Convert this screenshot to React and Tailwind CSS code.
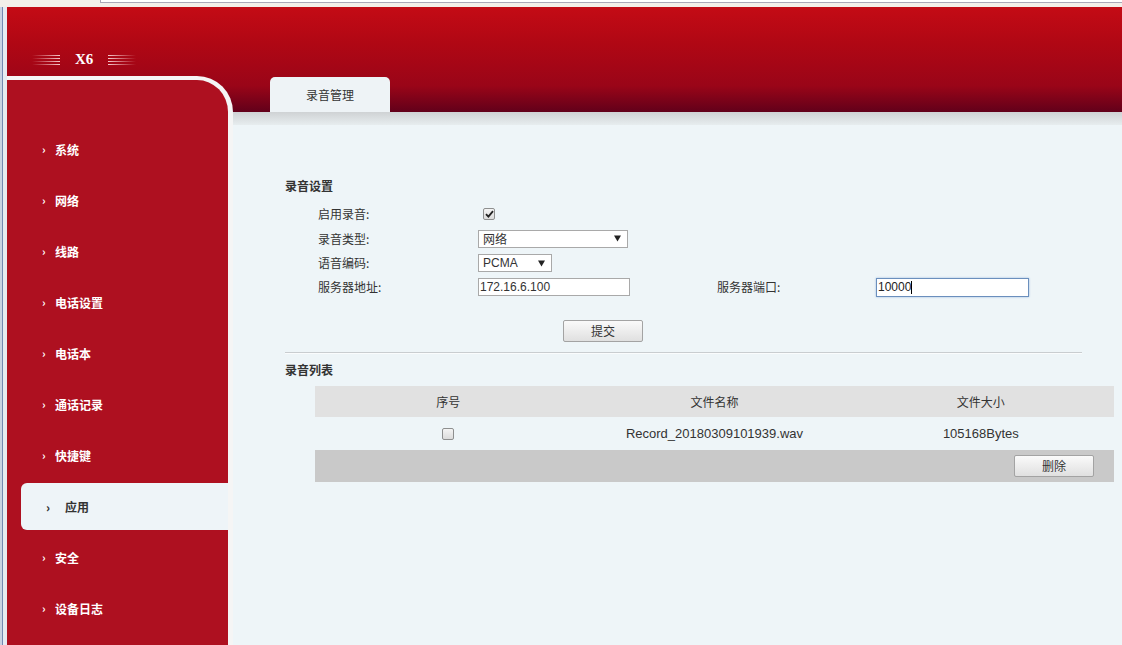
import React from 'react';

const menu = ['系统', '网络', '线路', '电话设置', '电话本', '通话记录', '快捷键', '应用', '安全', '设备日志'];

const cjk = "font-['Noto_Sans_CJK_SC',sans-serif]";
const latin = "font-['Liberation_Sans','Noto_Sans_CJK_SC',sans-serif]";

const LogoLines = ({ flip }) => (
  <div className="flex flex-col gap-[2px] w-[28px]">
    {[0, 1, 2, 3].map((i) => (
      <div
        key={i}
        className={`h-[1px] ${flip ? 'bg-gradient-to-l' : 'bg-gradient-to-r'} from-transparent to-[#f6c9cc]`}
      />
    ))}
  </div>
);

const Check = ({ checked }) => (
  <span className="w-[12px] h-[12px] border border-[#8e8f8f] rounded-[2px] bg-gradient-to-b from-[#f4f4f4] to-[#dcdcdc] flex items-center justify-center">
    {checked && (
      <svg width="9" height="8" viewBox="0 0 9 8">
        <path d="M1 4.2 L3.4 6.6 L8 1.2" stroke="#222" strokeWidth="1.8" fill="none" />
      </svg>
    )}
  </span>
);

const Select = ({ value, width }) => (
  <div className={`${width} h-[18px] border border-[#a9a9a9] bg-white flex items-center justify-between pl-[4px] pr-[6px] text-[12px] text-[#333]`}>
    <span>{value}</span>
    <svg width="7" height="7" viewBox="0 0 7 7">
      <path d="M0 0.5 H7 L3.5 6.5 Z" fill="#222" />
    </svg>
  </div>
);

const Btn = ({ children }) => (
  <button className={`w-[80px] h-[22px] border border-[#a3a3a3] rounded-[2px] bg-gradient-to-b from-[#fafafa] to-[#e0e0e0] text-[12px] text-[#333] ${cjk}`}>
    {children}
  </button>
);

export default function App() {
  return (
    <div className={`w-[1122px] h-[645px] overflow-hidden flex flex-col ${cjk}`}>
      {/* browser chrome top */}
      <div className="h-[7px] shrink-0 flex bg-[#f3efe9]">
        <div className="w-[100px]" />
        <div className="flex-1 h-[3px] border-l border-b border-[#aaa8b8] bg-white" />
      </div>

      <div className="flex-1 flex min-h-0">
        {/* window frame left */}
        <div className="w-[7px] shrink-0 flex">
          <span className="w-[2px] bg-[#c9d3e3]" />
          <span className="w-[1px] bg-[#7389b1]" />
          <span className="flex-1 bg-[#e6ebf1]" />
        </div>

        <div className="flex-1 flex flex-col bg-[#eef5f8] bg-[linear-gradient(180deg,#c40b15_0%,#b00714_35%,#9a0518_75%,#62001a_100%)] bg-no-repeat bg-[length:100%_105px]">
          {/* logo */}
          <div className="h-[69px] shrink-0 flex items-end pb-[11px] pl-[25px] gap-[15px]">
            <LogoLines />
            <span className="font-['Liberation_Serif',serif] font-bold text-[15px] leading-none text-white mb-[-2px]">X6</span>
            <LogoLines flip />
          </div>

          <div className="flex-1 flex min-h-0">
            {/* sidebar */}
            <nav className="w-[226px] shrink-0 bg-[#ae1020] border-t-4 border-r-[5px] border-[#f5f5f5] rounded-tr-[36px] pt-[44px]">
              {menu.map((m) =>
                m === '应用' ? (
                  <div key={m} className="h-[51px] py-[2px] pl-[14px]">
                    <div className="h-full rounded-l-[6px] bg-[#eef4f8] flex items-center pl-[25px] text-[#333] text-[12px] font-bold">
                      <span className="w-[19px] text-[12px] font-black leading-none">›</span>
                      <span>{m}</span>
                    </div>
                  </div>
                ) : (
                  <div key={m} className="h-[51px] flex items-center pl-[35px] text-white text-[12px] font-bold">
                    <span className="w-[13px] text-[11px] leading-none">›</span>
                    <span>{m}</span>
                  </div>
                )
              )}
            </nav>

            {/* main */}
            <div className="flex-1 flex flex-col min-w-0">
              <div className="h-[36px] shrink-0 pt-[1px] pl-[37px]">
                <div className="w-[120px] h-[35px] rounded-t-[5px] bg-[#eef3f6] flex items-center justify-center text-[12px] text-[#333]">
                  录音管理
                </div>
              </div>
              <div className="h-[13px] shrink-0 bg-gradient-to-b from-[#cfd2d4] to-[#e7edef]" />

              <div className="flex-1 pl-[52px] pt-[51px] text-[#333] text-[12px]">
                <div className="h-[20px] flex items-center font-bold">录音设置</div>

                <div className="pl-[33px] mt-[5px]">
                  <div className="h-[25px] flex items-center">
                    <span className="w-[160px]">启用录音:</span>
                    <span className="pl-[5px]"><Check checked /></span>
                  </div>
                  <div className="h-[25px] flex items-center">
                    <span className="w-[160px]">录音类型:</span>
                    <Select value="网络" width="w-[150px]" />
                  </div>
                  <div className="h-[24px] flex items-center">
                    <span className="w-[160px]">语音编码:</span>
                    <div className={latin}>
                      <Select value="PCMA" width="w-[74px]" />
                    </div>
                  </div>
                  <div className="h-[24px] flex items-center">
                    <span className="w-[160px]">服务器地址:</span>
                    <div className={`w-[152px] h-[18px] border border-[#a9a9a9] bg-white flex items-center px-[1px] ${latin} text-[12px]`}>
                      172.16.6.100
                    </div>
                    <span className="w-[87px]" />
                    <span className="w-[159px]">服务器端口:</span>
                    <div className={`w-[153px] h-[19px] border border-[#6b8fbd] shadow-[0_0_2px_#9dbbe0] bg-white flex items-center px-[1px] ${latin} text-[12px] text-[#222]`}>
                      10000<span className="w-[1px] h-[13px] bg-black" />
                    </div>
                  </div>
                  <div className="mt-[21px] pl-[245px]">
                    <Btn>提交</Btn>
                  </div>
                </div>

                <div className="mt-[10px] w-[797px] h-[2px] border-t border-[#c9cdd0] bg-white/70" />

                <div className="mt-[6px] h-[20px] flex items-center font-bold">录音列表</div>

                <div className="mt-[6px] ml-[30px] w-[799px]">
                  <div className="h-[31px] grid grid-cols-3 items-center text-center bg-[#e1e1e1]">
                    <span>序号</span>
                    <span>文件名称</span>
                    <span>文件大小</span>
                  </div>
                  <div className={`h-[33px] grid grid-cols-3 items-center text-center text-[13px] ${latin}`}>
                    <span className="flex justify-center"><Check /></span>
                    <span>Record_20180309101939.wav</span>
                    <span>105168Bytes</span>
                  </div>
                  <div className="h-[32px] bg-[#c9c9c9] flex items-center justify-end pr-[20px]">
                    <Btn>删除</Btn>
                  </div>
                </div>
              </div>
            </div>
          </div>
        </div>
      </div>
    </div>
  );
}
